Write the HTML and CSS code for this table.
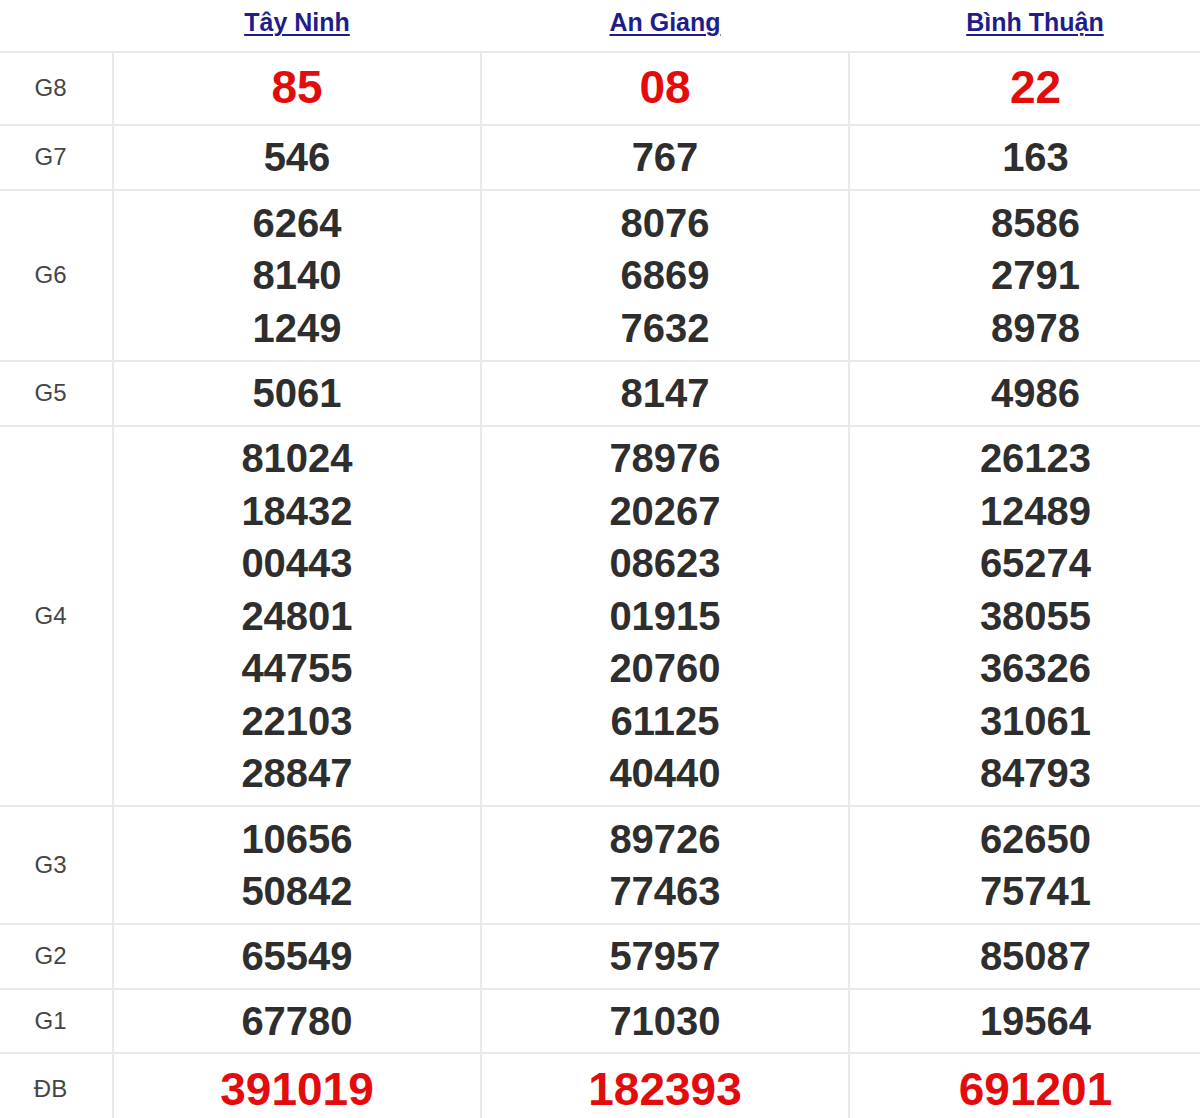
FILE: index.html
```html
<!DOCTYPE html>
<html lang="vi">
<head>
<meta charset="utf-8">
<title>Kết quả xổ số</title>
<link rel="stylesheet" href="styles.css">
</head>
<body>
<div class="wrap">
<table class="kq">
  <colgroup>
    <col class="c-label">
    <col class="c-prov">
    <col class="c-prov">
    <col class="c-prov3">
  </colgroup>
  <thead>
    <tr>
      <th class="h-empty"></th>
      <th><a href="#">Tây Ninh</a></th>
      <th><a href="#">An Giang</a></th>
      <th><a href="#">Bình Thuận</a></th>
    </tr>
  </thead>
  <tbody>
    <tr class="g8">
      <td class="lbl">G8</td>
      <td><div class="n red">85</div></td>
      <td><div class="n red">08</div></td>
      <td><div class="n red">22</div></td>
    </tr>
    <tr>
      <td class="lbl">G7</td>
      <td><div class="n">546</div></td>
      <td><div class="n">767</div></td>
      <td><div class="n">163</div></td>
    </tr>
    <tr class="g6">
      <td class="lbl">G6</td>
      <td><div class="n">6264</div><div class="n">8140</div><div class="n">1249</div></td>
      <td><div class="n">8076</div><div class="n">6869</div><div class="n">7632</div></td>
      <td><div class="n">8586</div><div class="n">2791</div><div class="n">8978</div></td>
    </tr>
    <tr>
      <td class="lbl">G5</td>
      <td><div class="n">5061</div></td>
      <td><div class="n">8147</div></td>
      <td><div class="n">4986</div></td>
    </tr>
    <tr class="g4">
      <td class="lbl">G4</td>
      <td><div class="n">81024</div><div class="n">18432</div><div class="n">00443</div><div class="n">24801</div><div class="n">44755</div><div class="n">22103</div><div class="n">28847</div></td>
      <td><div class="n">78976</div><div class="n">20267</div><div class="n">08623</div><div class="n">01915</div><div class="n">20760</div><div class="n">61125</div><div class="n">40440</div></td>
      <td><div class="n">26123</div><div class="n">12489</div><div class="n">65274</div><div class="n">38055</div><div class="n">36326</div><div class="n">31061</div><div class="n">84793</div></td>
    </tr>
    <tr class="g3">
      <td class="lbl">G3</td>
      <td><div class="n">10656</div><div class="n">50842</div></td>
      <td><div class="n">89726</div><div class="n">77463</div></td>
      <td><div class="n">62650</div><div class="n">75741</div></td>
    </tr>
    <tr>
      <td class="lbl">G2</td>
      <td><div class="n">65549</div></td>
      <td><div class="n">57957</div></td>
      <td><div class="n">85087</div></td>
    </tr>
    <tr>
      <td class="lbl">G1</td>
      <td><div class="n">67780</div></td>
      <td><div class="n">71030</div></td>
      <td><div class="n">19564</div></td>
    </tr>
    <tr class="db">
      <td class="lbl">ĐB</td>
      <td><div class="n red">391019</div></td>
      <td><div class="n red">182393</div></td>
      <td><div class="n red">691201</div></td>
    </tr>
  </tbody>
</table>
</div>
</body>
</html>
```
FILE: styles.css
```css
html, body {
  margin: 0;
  padding: 0;
  background: #ffffff;
  overflow: hidden;
}
.wrap {
  width: 1200px;
  height: 1118px;
  overflow: hidden;
}
.kq {
  border-collapse: collapse;
  table-layout: fixed;
  width: 1232px;
  margin-left: -11px;
  font-family: "Liberation Sans", Arial, sans-serif;
}
.c-label { width: 124px; }
.c-prov { width: 368px; }
.c-prov3 { width: 372px; }
.kq thead th {
  height: 50px;
  padding: 0 0 1px 0;
  text-align: center;
  vertical-align: middle;
  border-bottom: 2px solid #e9e9e9;
  font-size: 25px;
  font-weight: bold;
  line-height: 30px;
}
.kq thead th a {
  color: #1f1d8c;
  text-decoration: underline;
  text-decoration-thickness: 2px;
  text-underline-offset: 3px;
  position: relative;
  top: -3px;
}
.kq td {
  border: 2px solid #e9e9e9;
  text-align: center;
  vertical-align: middle;
  padding: 5px 0;
}
.kq td:first-child {
  border-left: none;
}
.kq td:last-child {
  border-right: none;
}
.lbl {
  font-size: 24px;
  color: #454545;
}
.n {
  font-size: 40px;
  font-weight: bold;
  color: #2e2e2e;
  line-height: 52.5px;
}
.g8 td { padding: 4px 0 7px; }
.g8 td.lbl { padding: 5px 0 6px; }
.g6 td { padding: 6px 0; }
.g4 td { padding: 5.5px 0; }
.g3 td { padding: 5.5px 0; }
.db td { padding: 5px 0 6px; }
.n.red {
  color: #e30b0b;
  font-size: 46px;
  line-height: 60px;
}
```
